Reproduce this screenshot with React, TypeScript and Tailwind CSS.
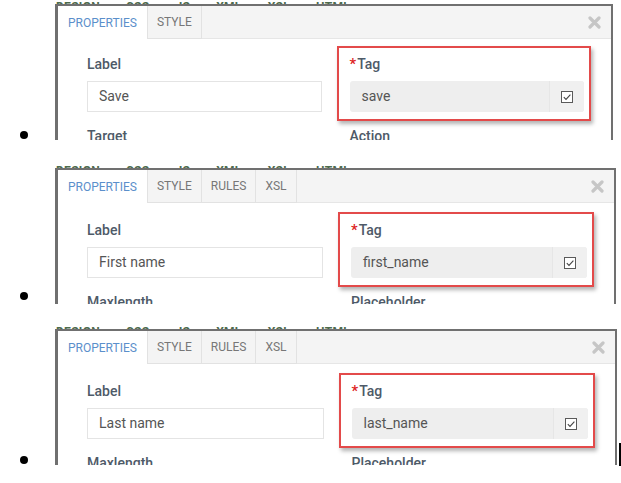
const font = { fontFamily: "Roboto, 'Liberation Sans', sans-serif" };

type PanelProps = {
  width: string;
  pt: string;
  tabs: string[];
  label: string;
  tag: string;
  next: [string, string];
};

function CloseIcon() {
  return (
    <svg width="13" height="13" viewBox="0 0 13 13">
      <path d="M2 2 L11 11 M11 2 L2 11" stroke="#c6c6c6" strokeWidth="3.2" strokeLinecap="round" />
    </svg>
  );
}

function CheckBox() {
  return (
    <div className="w-[12px] h-[12px] border border-[#5a5a5a] bg-white flex items-center justify-center">
      <svg width="10" height="10" viewBox="0 0 10 10">
        <path d="M1.8 5.2 L4 7.4 L8.4 2.6" stroke="#444" strokeWidth="1.1" fill="none" />
      </svg>
    </div>
  );
}

function BackStrip({ h }: { h: string }) {
  return (
    <div className={`${h} overflow-hidden pl-[56px] flex items-end`}>
      <div className="flex gap-[26px] text-[12px] font-bold text-[#4d6b4d] leading-[12px] mb-[-9px] tracking-wide">
        <span>DESIGN</span>
        <span>CSS</span>
        <span>JS</span>
        <span>XML</span>
        <span>XSL</span>
        <span>HTML</span>
      </div>
    </div>
  );
}

function Panel({ width, pt, tabs, label, tag, next }: PanelProps) {
  return (
    <div className={`${width} h-[136px] overflow-hidden border-l-[3px] border-t-2 border-r-2 border-[#707070] bg-white`}>
      <div className="flex h-[33px] bg-[#f4f4f4]">
        {tabs.map((t, i) =>
          i === 0 ? (
            <div key={t} className="px-[10px] flex items-center bg-white border-r border-[#e2e2e2] text-[12px] text-[#5b8fcb]">
              {t}
            </div>
          ) : (
            <div key={t} className="px-[9px] flex items-center border-r border-b border-[#e2e2e2] text-[12px] text-[#777]">
              {t}
            </div>
          )
        )}
        <div className="flex-1 border-b border-[#e6e6e6] flex items-center justify-end pr-[10px]">
          <CloseIcon />
        </div>
      </div>
      <div className={`grid grid-cols-2 gap-x-[28px] pl-[29px] pr-[27px] ${pt}`}>
        <div>
          <div className="text-[14px] leading-[20px] font-medium text-[#4e5a68] mb-[7px]">Label</div>
          <div className="h-[31px] border border-[#e4e4e4] flex items-center pl-[11px] text-[14px] text-[#555]">{label}</div>
        </div>
        <div className="relative">
          <div className="absolute -top-[8px] -left-[13px] -right-[7px] -bottom-[9px] border-2 border-[#e34a4a] shadow-[2px_3px_4px_rgba(0,0,0,0.3)]" />
          <div className="text-[14px] leading-[20px] font-medium text-[#4e5a68] mb-[7px]">
            <span className="text-[#d22] text-[15px] mr-[1px]">*</span>Tag
          </div>
          <div className="h-[31px] bg-[#eeeeee] rounded-[3px] flex">
            <div className="flex-1 flex items-center pl-[12px] text-[14px] text-[#555]">{tag}</div>
            <div className="w-[35px] border-l border-[#e6e6e6] bg-[#f0f0f0] rounded-r-[3px] flex items-center justify-center">
              <CheckBox />
            </div>
          </div>
        </div>
        <div className="mt-[14px] text-[14px] leading-[20px] font-medium text-[#4e5a68]">{next[0]}</div>
        <div className="mt-[14px] text-[14px] leading-[20px] font-medium text-[#4e5a68]">{next[1]}</div>
      </div>
    </div>
  );
}

function Bullet({ pb }: { pb: string }) {
  return (
    <div className={`w-[55px] flex items-end ${pb}`}>
      <div className="ml-[20px] w-[8px] h-[8px] rounded-full bg-black" />
    </div>
  );
}

export default function App() {
  const short = ["PROPERTIES", "STYLE"];
  const long = ["PROPERTIES", "STYLE", "RULES", "XSL"];
  return (
    <div className="w-[621px] h-[483px] bg-white overflow-hidden" style={font}>
      <BackStrip h="h-[4px]" />
      <div className="flex">
        <Bullet pb="pb-[1px]" />
        <Panel width="w-[558px]" pt="pt-[15px]" tabs={short} label="Save" tag="save" next={["Target", "Action"]} />
      </div>

      <div className="h-[22px]" />
      <BackStrip h="h-[6px]" />
      <div className="flex">
        <Bullet pb="pb-[4px]" />
        <Panel width="w-[561px]" pt="pt-[17px]" tabs={long} label="First name" tag="first_name" next={["Maxlength", "Placeholder"]} />
      </div>

      <div className="h-[19px]" />
      <BackStrip h="h-[6px]" />
      <div className="flex">
        <Bullet pb="pb-[2px]" />
        <Panel width="w-[562px]" pt="pt-[17px]" tabs={long} label="Last name" tag="last_name" next={["Maxlength", "Placeholder"]} />
        <div className="ml-[2px] mt-[114px] w-[2px] h-[23px] bg-black" />
      </div>
    </div>
  );
}
